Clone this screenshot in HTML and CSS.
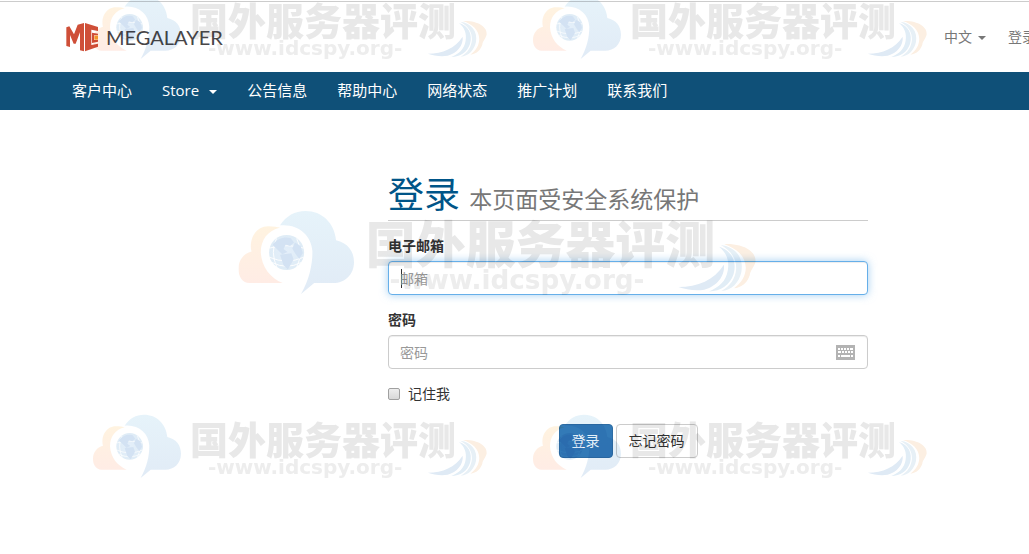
FILE: index.html
```html
<!DOCTYPE html>
<html lang="zh-CN">
<head>
<meta charset="utf-8">
<title>登录 - MEGALAYER</title>
<link rel="stylesheet" href="styles.css">
</head>
<body>
<header class="header">
  <a class="brand" href="#">
    <svg class="brand-mark" viewBox="0 0 99 87" aria-hidden="true">
      <path fill="#cf4f38" d="M1 13L10 10 24 34 35 5 54 0V85L42 82V28L29 62H23L12 36V72L1 69Z"/>
      <path fill="#cf4f38" d="M57 0L96 12V24L76 20V66L96 62V71L57 85Z"/>
      <path fill="#cf4f38" d="M78 29L96 32V37H84V51H96V56L78 60Z"/>
      <path fill="#f2a02e" d="M85 38H96V50H85Z"/>
    </svg>
    <span class="brand-name">MEGALAYER</span>
  </a>
  <ul class="top-menu">
    <li><a href="#">中文<span class="caret"></span></a></li>
    <li><a href="#">登录</a></li>
  </ul>
</header>
<nav class="nav">
  <a href="#">客户中心</a>
  <a href="#">Store<span class="caret caret-wide"></span></a>
  <a href="#">公告信息</a>
  <a href="#">帮助中心</a>
  <a href="#">网络状态</a>
  <a href="#">推广计划</a>
  <a href="#">联系我们</a>
</nav>
<main class="main">
  <form class="login">
    <h1 class="title">登录 <small>本页面受安全系统保护</small></h1>
    <div class="field">
      <label for="email">电子邮箱</label>
      <input class="control" id="email" type="email" placeholder="邮箱" autofocus>
    </div>
    <div class="field">
      <label for="password">密码</label>
      <div class="password">
        <input class="control" id="password" type="password" placeholder="密码">
        <svg class="keyboard" viewBox="0 0 19 15" aria-hidden="true">
          <path fill="#b3b3b3" d="M0 0H19V15H0Z"/>
          <path fill="#fff" d="M2 3H4V5H2ZM5 3H7V5H5ZM8 3H10V5H8ZM11 3H13V5H11ZM14 3H17V5H14ZM2 6H5V8H2ZM6 6H8V8H6ZM9 6H11V8H9ZM12 6H14V8H12ZM15 6H17V8H15ZM2 10H4V12H2ZM5 10H14V12H5ZM15 10H17V12H15Z"/>
        </svg>
      </div>
    </div>
    <label class="remember"><input type="checkbox">记住我</label>
    <div class="actions">
      <button class="btn btn-primary" type="submit">登录</button>
      <button class="btn" type="button">忘记密码</button>
    </div>
  </form>
</main>

<svg class="defs" aria-hidden="true">
  <defs>
    <linearGradient id="warm" x1="0" y1="0" x2="0" y2="1"><stop offset="0" stop-color="#fff3e0"/><stop offset="1" stop-color="#ffece5"/></linearGradient>
    <linearGradient id="cool" x1="0" y1="0" x2="0" y2="1"><stop offset="0" stop-color="#e6f3fa"/><stop offset="1" stop-color="#e1ebf6"/></linearGradient>
    <radialGradient id="globe"><stop offset="0" stop-color="#e4effa"/><stop offset="1" stop-color="#dfecf6"/></radialGradient>
    <symbol id="stamp" viewBox="0 0 396 67">
      <g transform="scale(.3333) translate(-39 -27)">
        <path fill="url(#warm)" d="M64 194C49 194 39 180 39 162C39 141 51 127 69 122C62 92 80 64 107 64C119 64 129 66 134 67C106 74 90 95 90 124C92 158 112 182 140 194Z"/>
        <path fill="url(#cool)" d="M134 62C148 40 168 29 192 29C230 29 258 56 262 96C288 102 303 120 303 146C303 175 282 194 256 194H212L182 219C200 187 208 155 208 122C206 84 175 58 134 62Z"/>
        <circle cx="149" cy="124" r="40" fill="url(#globe)"/>
        <path fill="none" stroke="#fff" stroke-width="2" d="M110 135Q149 152 188 135M116 147Q149 164 182 147M126 92Q111 124 127 158M172 92Q188 124 172 158M110 114Q149 103 188 114"/>
        <path fill="#d3e2f3" d="M117 107C127 91 146 87 158 91L166 101 157 109 147 106 142 116 151 123 139 128 128 117ZM168 101L181 109 186 125 178 139 169 127 162 115ZM134 129L160 126 165 140 152 163 142 153Z"/>
      </g>
      <g transform="scale(.3333) translate(621 -27)">
        <path fill="#dfeaf5" d="M384 203C428 203 466 187 488 152C491 178 471 202 443 209C421 213 401 208 384 203Z"/>
        <path fill="#e1edf6" d="M477 111C505 119 519 145 510 174C502 198 481 213 454 213C477 203 493 190 497 164C501 142 493 124 477 111Z"/>
        <path fill="#e7f0f6" d="M481 107C514 111 534 136 528 168C523 192 506 211 482 212C503 200 514 184 516 161C517 138 504 120 481 107Z"/>
        <path fill="#fcefe2" d="M489 105C532 103 563 122 560 146C556 160 548 165 547 176C541 193 530 203 511 206C529 192 537 179 538 159C537 132 518 115 489 105Z"/>
      </g>
      <text class="stamp-name" x="97" y="40">国外服务器评测</text>
      <text class="stamp-site" x="115" y="60">-www.idcspy.org-</text>
    </symbol>
  </defs>
</svg>
<div class="stamps" aria-hidden="true">
  <svg class="stamp top left"><use href="#stamp"/></svg>
  <svg class="stamp top right"><use href="#stamp"/></svg>
  <svg class="stamp large" viewBox="0 0 396 67"><use href="#stamp" width="396" height="67"/></svg>
  <svg class="stamp low left"><use href="#stamp"/></svg>
  <svg class="stamp low right"><use href="#stamp"/></svg>
</div>
</body>
</html>
```

FILE: styles.css
```css
* { box-sizing: border-box; }

body {
  margin: 0;
  background: #fff;
  color: #333;
  font: 14px/20px "Open Sans", "Noto Sans CJK SC", sans-serif;
  overflow-x: hidden;
}

a { color: inherit; text-decoration: none; }

.header {
  display: flex;
  align-items: center;
  justify-content: space-between;
  height: 72px;
  padding: 2px 0 0 66px;
  background: linear-gradient(#ccc, #ccc) 0 1px / 100% 1px no-repeat;
  overflow: hidden;
}

.brand { display: flex; align-items: center; gap: 7px; }
.brand-mark { width: 33px; height: 29px; }
.brand-name { color: #484648; font: 20px/29px Lato, sans-serif; }

.top-menu {
  display: flex;
  gap: 22px;
  margin: 0 -7px 0 0;
  padding: 0;
  color: #777;
  list-style: none;
}

.caret {
  display: inline-block;
  margin-left: 6px;
  border: 4px solid transparent;
  border-top-color: currentColor;
  border-bottom: 0;
  vertical-align: middle;
}
.caret-wide { margin-left: 10px; }

.nav {
  display: flex;
  gap: 30px;
  padding: 8px 72px 10px;
  background: #0f5078;
  color: #fff;
  font-size: 15px;
  white-space: nowrap;
}

.main { padding: 64px 24px 40px 388px; }
.login { max-width: 480px; }

.title {
  margin: 0 0 15px;
  border-bottom: 1px solid #ccc;
  color: #058;
  font-size: 36px;
  font-weight: 400;
  line-height: 42px;
}
.title small { color: #777; font-size: 23px; }

.field { margin-bottom: 15px; }
.field label { display: block; margin-bottom: 5px; font-weight: 700; }

.control {
  display: block;
  width: 100%;
  height: 34px;
  padding: 6px 11px;
  border: 1px solid #ccc;
  border-radius: 4px;
  background: #fff;
  box-shadow: inset 0 1px 1px rgba(0, 0, 0, .075);
  color: #555;
  font: inherit;
}
.control::placeholder { color: #999; }
.control:focus {
  border-color: #66afe9;
  outline: 0;
  box-shadow: inset 0 1px 1px rgba(0, 0, 0, .075), 0 0 8px rgba(102, 175, 233, .6);
}
.control:focus:placeholder-shown {
  background: linear-gradient(#333, #333) 12px 7px / 1px 19px no-repeat #fff;
  caret-color: transparent;
}

.password { position: relative; }
.keyboard { position: absolute; top: 10px; right: 13px; width: 19px; height: 15px; }

.remember { display: flex; align-items: center; gap: 8px; }
.remember input {
  appearance: none;
  width: 12px;
  height: 12px;
  margin: 0;
  border: 1px solid #a0a0a0;
  border-radius: 2px;
  background: linear-gradient(#eee, #d8d8d8);
}
.remember input:checked { background: #337ab7; }

.actions { display: flex; justify-content: center; gap: 3px; margin-top: 20px; }

.btn {
  padding: 6px 12px;
  border: 1px solid #ccc;
  border-radius: 4px;
  background: #fff;
  color: #333;
  font: inherit;
}
.btn-primary { border-color: #2e6da4; background: #337ab7; color: #fff; }

.defs { position: absolute; width: 0; height: 0; }

.stamps { pointer-events: none; mix-blend-mode: multiply; position: absolute; top: 0; left: 0; }
.stamp { position: absolute; width: 396px; height: 67px; }
.left { left: 93px; }
.right { left: 533px; }
.top { top: -5px; }
.low { top: 414px; }
.large { top: 210px; left: 237px; width: 523px; height: 88px; }
.stamp-name { fill: #e8e8e8; font: 900 38px "Noto Sans CJK SC", sans-serif; }
.stamp-site { fill: #ededed; font: 700 20px "DejaVu Sans", sans-serif; }
```
